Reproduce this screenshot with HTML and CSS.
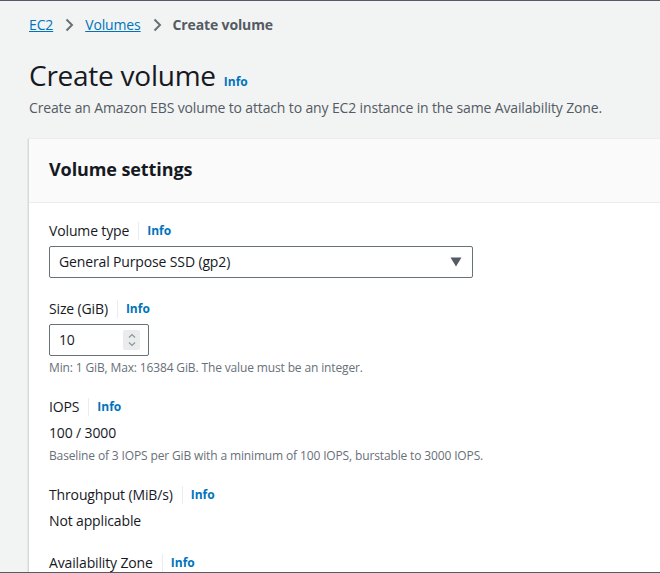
FILE: index.html
```html
<!DOCTYPE html>
<html lang="en">
<head>
<meta charset="utf-8">
<title>Create volume</title>
<link rel="stylesheet" href="styles.css">
</head>
<body>
<div class="page">
  <nav class="crumbs">
    <a class="crumb-link" href="#">EC2</a>
    <svg class="chev" width="16" height="16" viewBox="0 0 16 16"><path d="M5.5 2.5 11 8l-5.5 5.5" fill="none" stroke="#687078" stroke-width="2"/></svg>
    <a class="crumb-link" href="#">Volumes</a>
    <svg class="chev" width="16" height="16" viewBox="0 0 16 16"><path d="M5.5 2.5 11 8l-5.5 5.5" fill="none" stroke="#687078" stroke-width="2"/></svg>
    <span class="crumb-current">Create volume</span>
  </nav>

  <header class="head">
    <div class="title-row">
      <h1 class="title">Create volume</h1>
      <a class="info" href="#">Info</a>
    </div>
    <p class="desc">Create an Amazon EBS volume to attach to any EC2 instance in the same Availability Zone.</p>
  </header>

  <section class="card">
    <div class="card-head">
      <h2 class="card-title">Volume settings</h2>
    </div>
    <div class="card-body">
      <div class="field">
        <div class="label-row"><span class="label">Volume type</span><span class="sep"></span><a class="info" href="#">Info</a></div>
        <div class="select">
          <span>General Purpose SSD (gp2)</span>
          <svg width="12" height="10" viewBox="0 0 12 10"><path d="M0.5 0.5h11L6 9.5z" fill="#545b64"/></svg>
        </div>
      </div>

      <div class="field">
        <div class="label-row"><span class="label">Size (GiB)</span><span class="sep"></span><a class="info" href="#">Info</a></div>
        <div class="number">
          <span>10</span>
          <span class="spin">
            <svg width="8" height="14" viewBox="0 0 8 14"><path d="M1 4.5 4 1.5l3 3M1 9.5l3 3 3-3" fill="none" stroke="#879596" stroke-width="1.1"/></svg>
          </span>
        </div>
        <p class="hint">Min: 1 GiB, Max: 16384 GiB. The value must be an integer.</p>
      </div>

      <div class="field">
        <div class="label-row"><span class="label">IOPS</span><span class="sep"></span><a class="info" href="#">Info</a></div>
        <div class="value">100 / 3000</div>
        <p class="hint">Baseline of 3 IOPS per GiB with a minimum of 100 IOPS, burstable to 3000 IOPS.</p>
      </div>

      <div class="field">
        <div class="label-row"><span class="label">Throughput (MiB/s)</span><span class="sep"></span><a class="info" href="#">Info</a></div>
        <div class="value">Not applicable</div>
      </div>

      <div class="field">
        <div class="label-row"><span class="label">Availability Zone</span><span class="sep"></span><a class="info" href="#">Info</a></div>
      </div>
    </div>
  </section>
</div>
</body>
</html>
```

FILE: styles.css
```css
* { box-sizing: border-box; }
html, body { margin: 0; padding: 0; }
body {
  height: 100vh;
  overflow: hidden;
  background: #f2f3f3;
  border-top: 1px solid #545b64;
  border-bottom: 1px solid #545b64;
  font-family: "Open Sans", "Noto Sans", sans-serif;
  color: #16191f;
  font-size: 14px;
  line-height: 22px;
  letter-spacing: -0.14px;
}
.page {
  padding: 13px 0 0 29px;
}
.crumbs {
  display: flex;
  align-items: center;
  gap: 6px;
  height: 22px;
  font-size: 14px;
}
.crumb-link { color: #0073bb; text-decoration: underline; }
.chev { margin: 0 2px; }
.crumb-current { color: #545b64; font-weight: 700; }

.head { margin-top: 21px; }
.title-row { display: flex; align-items: baseline; gap: 8px; }
.title {
  margin: 0;
  font-size: 28px;
  line-height: 36px;
  font-weight: 400;
  color: #16191f;
  letter-spacing: -0.25px;
}
.info {
  color: #0073bb;
  font-size: 12px;
  font-weight: 700;
  text-decoration: none;
  letter-spacing: 0;
}
.desc {
  margin: 4px 0 0;
  color: #545b64;
  font-size: 14px;
  line-height: 22px;
}

.card {
  margin: 19px 0 0 -1px;
  background: #fff;
  border-left: 1px solid #d5dbdb;
  border-top: 1px solid #eaeded;
  box-shadow: 0 1px 1px rgba(0,28,36,0.3);
}
.card-head {
  background: #fafafa;
  border-bottom: 1px solid #eaeded;
  padding: 19px 20px 22px;
}
.card-title {
  margin: 0;
  font-size: 18px;
  line-height: 22px;
  font-weight: 700;
  color: #16191f;
  letter-spacing: -0.1px;
}
.card-body {
  padding: 17px 20px 20px;
  display: flex;
  flex-direction: column;
  gap: 20px;
}
.field { display: flex; flex-direction: column; }
.label-row {
  display: flex;
  align-items: center;
  height: 22px;
  margin-bottom: 4px;
}
.label { color: #16191f; font-size: 14px; }
.sep {
  width: 1px;
  height: 18px;
  background: #eaeded;
  margin: 0 8px 0 9px;
}
.select {
  width: 424px;
  height: 32px;
  border: 1px solid #687078;
  border-radius: 2px;
  display: flex;
  align-items: center;
  justify-content: space-between;
  padding: 0 10px 0 9px;
  color: #16191f;
}
.number {
  width: 100px;
  height: 32px;
  border: 1px solid #687078;
  border-radius: 2px;
  display: flex;
  align-items: center;
  justify-content: space-between;
  padding: 0 8px 0 9px;
}
.spin {
  width: 17px;
  height: 20px;
  background: #e9ebed;
  display: flex;
  align-items: center;
  justify-content: center;
  border-radius: 2px;
}
.hint {
  margin: 4px 0 0;
  font-size: 12px;
  line-height: 16px;
  color: #687078;
}
.value { color: #16191f; }
```
